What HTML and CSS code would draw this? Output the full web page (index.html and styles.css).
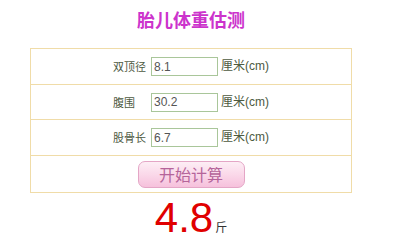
FILE: index.html
```html
<!DOCTYPE html>
<html lang="zh-CN">
<head>
<meta charset="utf-8">
<title>胎儿体重估测</title>
<link rel="stylesheet" href="styles.css">
</head>
<body>
<div class="page">
  <h1 class="title">胎儿体重估测</h1>
  <div class="calc">
    <div class="row">
      <span class="label">双顶径</span>
      <input class="field" type="text" value="8.1">
      <span class="unit">厘米(cm)</span>
    </div>
    <div class="row row-short">
      <span class="label">腹围</span>
      <input class="field" type="text" value="30.2">
      <span class="unit">厘米(cm)</span>
    </div>
    <div class="row">
      <span class="label">股骨长</span>
      <input class="field" type="text" value="6.7">
      <span class="unit">厘米(cm)</span>
    </div>
    <div class="row row-btn">
      <button class="btn" type="button">开始计算</button>
    </div>
  </div>
  <div class="result"><span class="num">4.8</span><span class="jin">斤</span></div>
</div>
</body>
</html>
```

FILE: styles.css
```css
html, body {
  margin: 0;
  padding: 0;
  background: #ffffff;
}

body {
  font-family: "Liberation Sans", "Noto Sans CJK SC", sans-serif;
  font-size: 12px;
  color: #4d5a3f;
}

.page {
  margin-left: 30px;
  width: 322px;
}

.title {
  margin: 0;
  padding-top: 10px;
  height: 18px;
  line-height: 18px;
  font-size: 18px;
  font-weight: bold;
  color: #cc33cc;
  text-align: center;
  font-family: "Noto Sans CJK SC", sans-serif;
  margin-bottom: 20px;
}

.calc {
  border: 1px solid #f0dca8;
  border-bottom: none;
}

.row {
  display: flex;
  justify-content: center;
  align-items: center;
  height: 35px;
  border-bottom: 1px solid #f0dca8;
}

.row-short {
  height: 34px;
}

.row-btn {
  height: 36px;
}

.label {
  flex: 0 0 38px;
  width: 38px;
  font-family: "Noto Sans CJK SC", sans-serif;
  font-size: 11px;
  line-height: 19px;
  color: #4d5a3f;
  white-space: nowrap;
}

.field {
  flex: 0 0 67px;
  box-sizing: border-box;
  width: 67px;
  height: 19px;
  margin: 0;
  padding: 0 2px;
  border: 1px solid #a9c69a;
  font-family: "Liberation Sans", sans-serif;
  font-size: 12px;
  color: #555555;
  background: #ffffff;
  outline: none;
}

.unit {
  margin-left: 3px;
  line-height: 19px;
  font-size: 12px;
  color: #4d5a3f;
  white-space: nowrap;
}

.btn {
  box-sizing: border-box;
  width: 107px;
  height: 27px;
  margin: 0;
  padding: 0;
  border: 1px solid #e4a6c6;
  border-radius: 7px;
  background: linear-gradient(to bottom, #fdeef5 0%, #fad6e8 55%, #f6c1dc 100%);
  font-family: "Noto Sans CJK SC", sans-serif;
  font-size: 16px;
  line-height: 25px;
  color: #b5649a;
  cursor: pointer;
}

.result {
  margin-top: 4px;
  text-align: center;
  line-height: 42px;
  height: 42px;
}

.num {
  font-family: "Liberation Sans", sans-serif;
  font-size: 42px;
  color: #e00000;
}

.jin {
  font-family: "Noto Sans CJK SC", sans-serif;
  font-size: 12px;
  color: #333333;
  margin-left: 2px;
}
```
